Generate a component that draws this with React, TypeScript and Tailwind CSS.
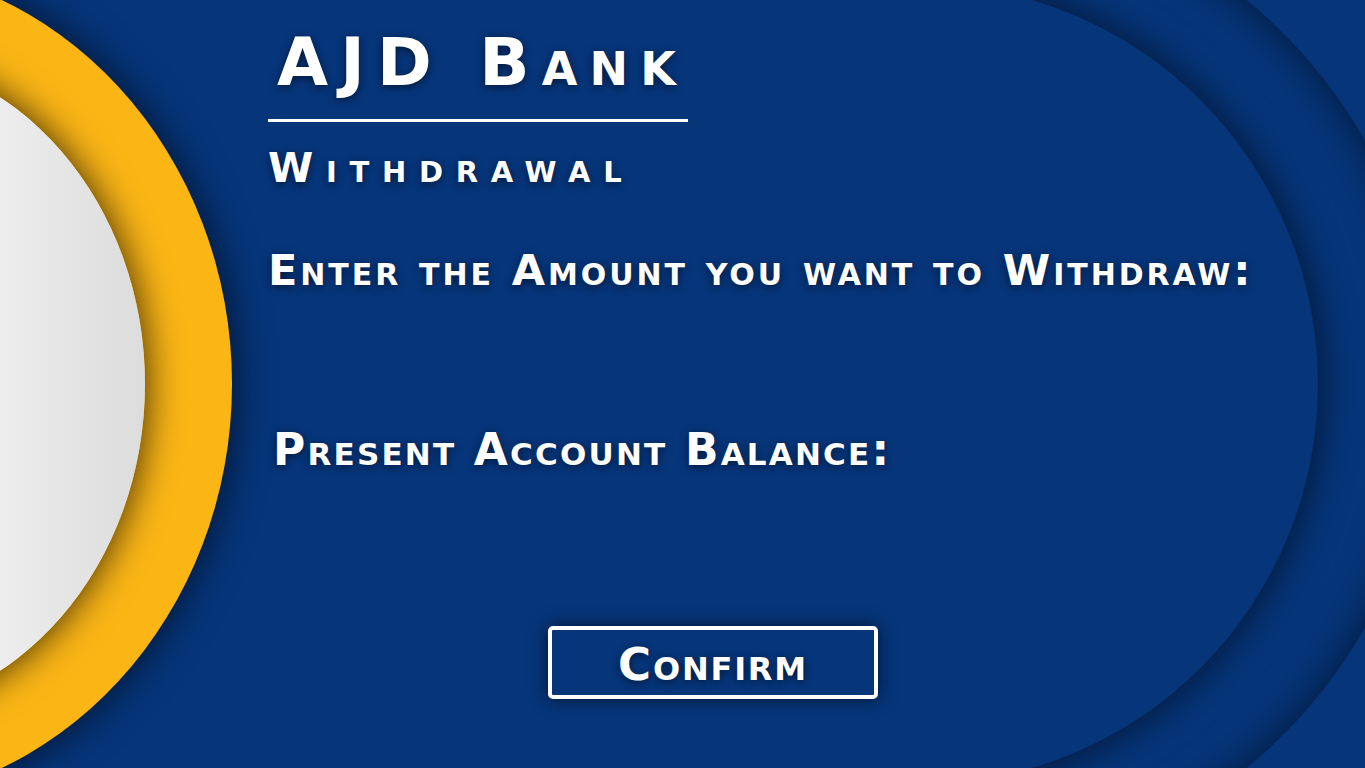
export default function App() {
  const shadow = "[text-shadow:0_2px_8px_rgba(0,0,0,0.55)]";
  return (
    <div className="relative w-[1365px] h-[768px] overflow-hidden bg-[#06357a] font-['DejaVu_Sans',sans-serif] text-white">
      {/* decorative background art */}
      <div className="absolute left-[439px] top-[-111px] w-[990px] h-[990px] rounded-full bg-[#06357a] shadow-[inset_0_0_45px_rgba(0,0,0,0.55)]" />
      <div className="absolute left-[524px] top-[-16px] w-[794px] h-[800px] rounded-[50%] bg-[#06357a] shadow-[0_0_40px_rgba(0,0,0,0.65)]" />
      <div className="absolute left-[-200px] top-[-200px] w-[1121px] h-[1168px] bg-[#06357a]" />
      <div className="absolute left-[-542px] top-[-36px] w-[774px] h-[840px] rounded-[50%] bg-[#fbb616] shadow-[0_0_40px_rgba(0,0,0,0.7)]" />
      <div className="absolute left-[-429px] top-[54px] w-[574px] h-[660px] rounded-[50%] bg-[linear-gradient(90deg,#f7f7f7_0%,#f0f0f0_70%,#dcdcdc_100%)] shadow-[0_0_38px_rgba(0,0,0,0.8)]" />

      {/* content */}
      <div className="relative flex flex-col pl-[268px] pt-[30px]">
        <div className={`pl-[9px] text-[66px] font-bold leading-none tracking-[0.185em] [font-variant:small-caps] ${shadow}`}>
          AJD Bank
        </div>
        <div className="mt-[23px] h-[3px] w-[420px] bg-white" />
        <div className={`mt-[26px] text-[41px] font-bold leading-none tracking-[0.31em] [font-variant:small-caps] ${shadow}`}>
          Withdrawal
        </div>
        <div className={`mt-[60px] text-[43px] font-bold leading-none tracking-[0.068em] [font-variant:small-caps] ${shadow}`}>
          Enter the Amount you want to Withdraw:
        </div>
        <div className={`mt-[136px] pl-[5px] text-[44px] font-bold leading-none tracking-[0.05em] [font-variant:small-caps] ${shadow}`}>
          Present Account Balance:
        </div>
        <button className="ml-[280px] mt-[154px] flex h-[73px] w-[330px] items-center justify-center rounded-[5px] border-[4px] border-white bg-[#06357a] shadow-[0_0_18px_rgba(0,0,0,0.6)]">
          <span className={`mt-[3px] text-[45px] font-bold leading-none tracking-[0.04em] [font-variant:small-caps] ${shadow}`}>Confirm</span>
        </button>
      </div>
    </div>
  );
}
